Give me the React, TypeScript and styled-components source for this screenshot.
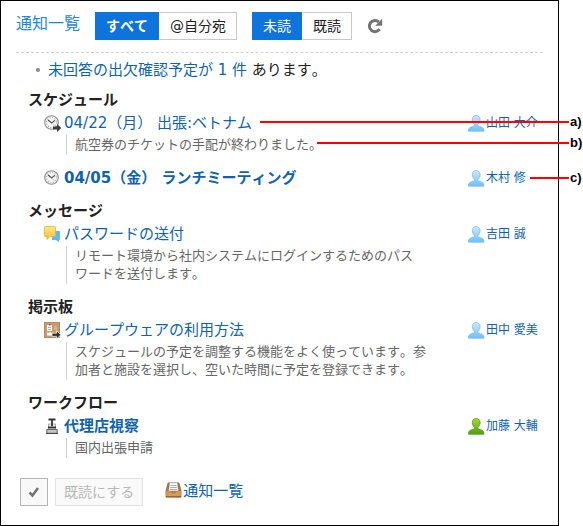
import React from 'react';
import styled, { createGlobalStyle } from 'styled-components';

const GlobalStyle = createGlobalStyle`
  *, *::before, *::after { box-sizing: border-box; }
  body {
    margin: 0;
    background: #fff;
    color: #222;
    font-family: "DejaVu Sans", "Noto Sans CJK JP", sans-serif;
    font-size: 15px;
    font-kerning: none;
    line-height: 22px;
  }
  button { font-family: inherit; }
  a { text-decoration: none; }
  svg { display: block; flex: none; }
`;

const Stage = styled.div`
  position: relative;
  padding-right: 24px;
`;

const Panel = styled.main`
  border: 1px solid #000;
  padding: 11px 15px 19px;
`;

const Header = styled.header`
  display: flex;
  align-items: center;
  padding-bottom: 12px;
  border-bottom: 1px dashed #d0d0d0;
`;

const Title = styled.h1`
  margin: 0 15px 0 0;
  padding-bottom: 4px;
  font-size: 16px;
  font-weight: 400;
  line-height: 24px;
  color: #1f86d6;
  white-space: nowrap;
`;

const Tabs = styled.div`
  display: flex;
  margin-right: 15px;
`;

const Tab = styled.button<{ $active?: boolean; $strong?: boolean }>`
  height: 28px;
  padding: 0 10px;
  border: 1px solid ${p => (p.$active ? '#0f73dc' : '#c8c8c8')};
  border-left-color: ${p => (p.$active ? '#0f73dc' : '#fff')};
  background: ${p => (p.$active ? '#0f73dc' : '#fff')};
  color: ${p => (p.$active ? '#fff' : '#222')};
  font-size: 14px;
  font-kerning: none;
  font-weight: ${p => (p.$strong ? 700 : 400)};
  line-height: 24px;
  white-space: nowrap;
`;

const IconButton = styled.button`
  padding: 0;
  border: 0;
  background: none;
`;

const Notices = styled.ul`
  list-style: none;
  margin: 0;
  padding: 6px 0 8px 20px;
`;

const Notice = styled.li`
  display: flex;
  align-items: center;
  gap: 8px;
  &::before {
    content: '';
    width: 4px;
    height: 4px;
    border-radius: 50%;
    background: #888;
  }
`;

const Link = styled.a<{ $unread?: boolean }>`
  color: #0f63ae;
  font-weight: ${p => (p.$unread ? 700 : 400)};
`;

const Groups = styled.div`
  display: flex;
  flex-direction: column;
  gap: 10px;
  padding-left: 12px;
`;

const GroupTitle = styled.h2`
  margin: 0;
  font-size: 15px;
  font-weight: 700;
  line-height: 22px;
`;

const Items = styled.ul`
  list-style: none;
  margin: 0;
  padding: 0 0 0 16px;
  display: flex;
  flex-direction: column;
  gap: 9px;
`;

const Item = styled.li`
  display: flex;
  align-items: flex-start;
`;

const ItemBody = styled.div`
  flex: 1;
  min-width: 0;
  margin-right: 36px;
`;

const ItemTitle = styled.div`
  display: flex;
  align-items: center;
  gap: 3px;
  height: 24px;
`;

const Excerpt = styled.p`
  margin: 0 0 2px 22px;
  padding: 1px 0 1px 8px;
  border-left: 1px solid #d0d0d0;
  color: #666;
  font-size: 13px;
  line-height: 18px;
  line-break: strict;
`;

const Sender = styled.a`
  display: flex;
  align-items: center;
  gap: 1px;
  width: 75px;
  height: 24px;
  color: #0f63ae;
  font-size: 12px;
  white-space: nowrap;
`;

const Footer = styled.footer`
  display: flex;
  align-items: center;
  padding: 18px 0 0 4px;
`;

const CheckButton = styled.button`
  display: grid;
  place-items: center;
  width: 28px;
  height: 28px;
  margin-right: 7px;
  padding: 0;
  border: 1px solid #b4b4b4;
  background: #f8f8f8;
`;

const ReadButton = styled.button`
  height: 28px;
  margin-right: 22px;
  padding: 0 8px;
  border: 1px solid #e2e2e2;
  background: #fafafa;
  color: #b8b8b8;
  font-size: 14px;
  line-height: 24px;
`;

const ArchiveLink = styled.a`
  display: flex;
  align-items: center;
  gap: 1px;
  padding-bottom: 3px;
  color: #0f63ae;
`;

const Callout = styled.div<{ $top: number; $left: number }>`
  position: absolute;
  top: ${p => p.$top}px;
  left: ${p => p.$left}px;
  right: 0;
  display: flex;
  align-items: center;
  height: 18px;
  color: #000;
  font: 700 13px/16px "Liberation Sans", sans-serif;
  pointer-events: none;
  &::before {
    content: '';
    flex: 1;
    height: 2px;
    background: #f00;
  }
`;

const CalloutLabel = styled.span`
  width: 14px;
  padding-left: 1px;
  white-space: nowrap;
`;

const Arrow = () => (
  <path d="M9 11.5h4V9l4.200 4-4.200 4v-2.500H9z" fill="#3c3c3c" />
);

const ClockIcon = ({ arrow }: { arrow?: boolean }) => (
  <svg width="17" height="17" viewBox="0 0 17 17" aria-hidden="true">
    <circle cx="7.5" cy="7.5" r="6.8" fill="#f5f5f3" stroke="#8d8d8d" strokeWidth="1.1" />
    <circle cx="7.5" cy="7.5" r="5" fill="none" stroke="#aaa" strokeWidth="1.2" strokeDasharray="1 1.62" />
    <path d="M4 5l3.6 2.9L11 5.4" fill="none" stroke="#444" strokeWidth="1.1" />
    <path d="M7.6 7.9l2.6 2.6" stroke="#b99" strokeWidth="0.6" />
    {arrow && <Arrow />}
  </svg>
);

const MessageIcon = () => (
  <svg width="17" height="17" viewBox="0 0 17 17" aria-hidden="true">
    <defs>
      <linearGradient id="bubble" x2="0" y2="1">
        <stop stopColor="#ffe88c" />
        <stop offset="1" stopColor="#f3c02b" />
      </linearGradient>
    </defs>
    <path d="M8 5h7q1 0 1 1v7q0 1-1 1v2l-3-2H8z" fill="#5bb9f5" />
    <path d="M1.5.5h9q1 0 1 1v8q0 1-1 1H6l-3 3v-3H1.5q-1 0-1-1v-8q0-1 1-1z" fill="url(#bubble)" stroke="#dfb13c" strokeWidth="0.8" />
  </svg>
);

const BoardIcon = () => (
  <svg width="17" height="17" viewBox="0 0 17 17" aria-hidden="true">
    <rect x="0.5" y="0.5" width="15" height="15" fill="#c79a70" stroke="#b58a61" />
    <path d="M3 3h5v6H3z" fill="#fff" />
    <path d="M4 5.5h3M4 7.5h3" stroke="#999" strokeWidth="0.8" />
    <path d="M5 2h1.5v1.6H5z" fill="#d33" />
    <path d="M10 4h3v4h-3z" fill="#d6ae87" />
    <path d="M3 10.5h5v3H3z" fill="#fff" />
    <path d="M8 11.2h4.5V8.7l4.5 4.1-4.5 4.1v-2.5H8z" fill="#333" stroke="#fff" strokeWidth="0.7" />
  </svg>
);

const StampIcon = () => (
  <svg width="17" height="17" viewBox="0 0 17 17" aria-hidden="true">
    <path d="M4.500.5h7v2h-7z" fill="#333" />
    <path d="M4.500 6h7v5h-7z" fill="#eee" stroke="#999" strokeWidth="0.8" />
    <path d="M7 2h2v6H7z" fill="#444" />
    <path d="M4 8.500h8v1.800H4z" fill="#333" />
    <path d="M2.800 11.500h10.400v3.800H2.800z" fill="#c4c4c4" stroke="#666" />
    <path d="M2 15.500h12" stroke="#444" />
  </svg>
);

const UserIcon = ({ green }: { green?: boolean }) => {
  const id = green ? 'user-green' : 'user-blue';
  return (
    <svg width="17" height="17" viewBox="0 0 17 17" aria-hidden="true">
      <defs>
        <linearGradient id={id} x2="0" y2="1">
          <stop stopColor={green ? '#a6dc32' : '#cde8fd'} />
          <stop offset="1" stopColor={green ? '#4f9f10' : '#6cc0fb'} />
        </linearGradient>
      </defs>
      <path
        d="M8.200.6C5.700.6 4.300 2 4.300 4.500c0 2.300 1 4 2.200 5v1.300c-2 .9-6 1.200-6 4.200v1.200h15.400V15c0-3-4-3.300-6-4.200V9.500c1.200-1 2.200-2.700 2.200-5C12.100 2 10.700.6 8.200.6z"
        fill={`url(#${id})`}
        stroke={green ? '#549c1c' : '#7bbcec'}
        strokeWidth="0.8"
      />
    </svg>
  );
};

const ReloadIcon = () => (
  <svg width="16" height="16" viewBox="0 0 16 16" aria-hidden="true">
    <path d="M12.600 11.200A5.600 5.600 0 1 1 11.800 4" fill="none" stroke="#747474" strokeWidth="3" />
    <path d="M15.200.8v7H8.200z" fill="#747474" />
  </svg>
);

const CheckIcon = () => (
  <svg width="12" height="12" viewBox="0 0 12 12" aria-hidden="true">
    <path d="M1.500 6.500l3 3 5.500-7.500" fill="none" stroke="#757575" strokeWidth="2.500" />
  </svg>
);

const TrayIcon = () => (
  <svg width="17" height="17" viewBox="0 0 17 17" aria-hidden="true">
    <path d="M3 1h11l2 8v6H1V9z" fill="#b97c3c" stroke="#93602b" strokeWidth="0.8" strokeLinejoin="round" />
    <path d="M4 2h9l1.200 7H2.800z" fill="#765029" />
    <path d="M4.500.7h8L13.500 9h-10z" fill="#fafafa" stroke="#999" strokeWidth="0.6" />
    <path d="M5.500 3.500h6M5.300 5.500h6.500M5 7.500h7" stroke="#999" strokeWidth="0.8" />
    <path d="M1.200 9.200h4l1 2h4.600l1-2h4V15H1.200z" fill="#d59b56" />
    <path d="M1 14.800h15" stroke="#805020" />
  </svg>
);

type Entry = {
  icon: React.ReactNode;
  title: string;
  sender: string;
  unread?: boolean;
  green?: boolean;
  text?: string;
};

const groups: { name: string; entries: Entry[] }[] = [
  {
    name: 'スケジュール',
    entries: [
      { icon: <ClockIcon arrow />, title: '04/22（月） 出張:ベトナム', sender: '山田 大介', text: '航空券のチケットの手配が終わりました。' },
      { icon: <ClockIcon />, title: '04/05（金） ランチミーティング', sender: '木村 修', unread: true },
    ],
  },
  {
    name: 'メッセージ',
    entries: [
      { icon: <MessageIcon />, title: 'パスワードの送付', sender: '吉田 誠', text: 'リモート環境から社内システムにログインするためのパスワードを送付します。' },
    ],
  },
  {
    name: '掲示板',
    entries: [
      { icon: <BoardIcon />, title: 'グループウェアの利用方法', sender: '田中 愛美', text: 'スケジュールの予定を調整する機能をよく使っています。参加者と施設を選択し、空いた時間に予定を登録できます。' },
    ],
  },
  {
    name: 'ワークフロー',
    entries: [
      { icon: <StampIcon />, title: '代理店視察', sender: '加藤 大輔', unread: true, green: true, text: '国内出張申請' },
    ],
  },
];

const callouts = [
  { label: 'a)', top: 113, left: 260 },
  { label: 'b)', top: 134, left: 317 },
  { label: 'c)', top: 169, left: 530 },
];

export default function App() {
  return (
    <Stage lang="ja">
      <GlobalStyle />
      <Panel>
        <Header>
          <Title>通知一覧</Title>
          <Tabs>
            <Tab type="button" $active $strong>すべて</Tab>
            <Tab type="button">@自分宛</Tab>
          </Tabs>
          <Tabs>
            <Tab type="button" $active>未読</Tab>
            <Tab type="button">既読</Tab>
          </Tabs>
          <IconButton type="button" aria-label="更新"><ReloadIcon /></IconButton>
        </Header>
        <Notices>
          <Notice>
            <span><Link href="#attendance">未回答の出欠確認予定が 1 件</Link> あります。</span>
          </Notice>
        </Notices>
        <Groups>
          {groups.map(group => (
            <section key={group.name}>
              <GroupTitle>{group.name}</GroupTitle>
              <Items>
                {group.entries.map(entry => (
                  <Item key={entry.title}>
                    <ItemBody>
                      <ItemTitle>
                        {entry.icon}
                        <Link href="#item" $unread={entry.unread}>{entry.title}</Link>
                      </ItemTitle>
                      {entry.text && <Excerpt>{entry.text}</Excerpt>}
                    </ItemBody>
                    <Sender href="#user"><UserIcon green={entry.green} />{entry.sender}</Sender>
                  </Item>
                ))}
              </Items>
            </section>
          ))}
        </Groups>
        <Footer>
          <CheckButton type="button" aria-label="すべて選択"><CheckIcon /></CheckButton>
          <ReadButton type="button" disabled>既読にする</ReadButton>
          <ArchiveLink href="#all"><TrayIcon />通知一覧</ArchiveLink>
        </Footer>
      </Panel>
      {callouts.map(c => (
        <Callout key={c.label} $top={c.top} $left={c.left}>
          <CalloutLabel>{c.label}</CalloutLabel>
        </Callout>
      ))}
    </Stage>
  );
}
